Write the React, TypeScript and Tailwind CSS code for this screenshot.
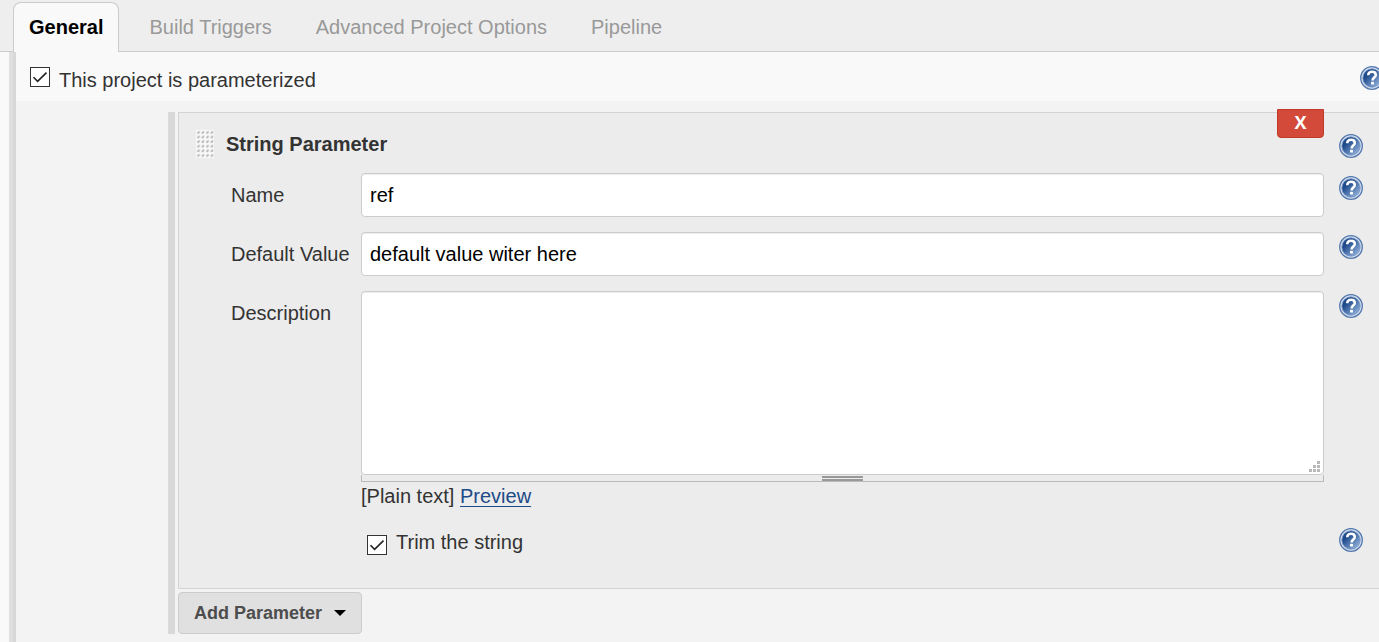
import { useState } from 'react'
import type { ReactNode } from 'react'

const TABS = ['General', 'Build Triggers', 'Advanced Project Options', 'Pipeline']

const FIELD =
  'block w-full rounded border border-[#ccc] bg-white px-2 text-[20px] text-black shadow-[inset_0_1px_1px_rgba(0,0,0,0.075)] outline-none'

function HelpButton({ label }: { label: string }) {
  return (
    <button type="button" aria-label={label} className="block size-6 shrink-0">
      <svg viewBox="0 0 24 24" className="size-6">
        <defs>
          <linearGradient id="help-fill" x1="0" y1="0" x2="1" y2="1">
            <stop offset="0.3" stopColor="#1f4a8c" />
            <stop offset="0.85" stopColor="#8aabd6" />
          </linearGradient>
        </defs>
        <circle cx="12" cy="12" r="11.3" fill="#d3dfef" stroke="#5377ad" strokeWidth="1.3" />
        <circle cx="12" cy="12" r="9.2" fill="url(#help-fill)" stroke="#7896c4" strokeWidth="0.8" />
        <path
          d="M8.2 9.2C8.3 7 9.9 5.8 12.1 5.8c2.2 0 3.7 1.2 3.7 3.1 0 2.6-3.2 2.7-3.2 5.5"
          fill="none"
          stroke="#fff"
          strokeWidth="2.5"
        />
        <rect x="11" y="15.8" width="3" height="2.8" rx="0.6" fill="#fff" />
      </svg>
    </button>
  )
}

interface CheckboxProps {
  id: string
  checked: boolean
  onChange: (value: boolean) => void
}

function Checkbox({ id, checked, onChange }: CheckboxProps) {
  return (
    <span className="grid size-5 shrink-0">
      <input
        id={id}
        type="checkbox"
        checked={checked}
        onChange={(e) => onChange(e.target.checked)}
        className="col-start-1 row-start-1 size-5 appearance-none border border-[#333] bg-white"
      />
      {checked && (
        <svg viewBox="0 0 20 20" className="pointer-events-none col-start-1 row-start-1 size-5">
          <path d="M3.5 10.2 7.6 14.3 16.5 5.6" fill="none" stroke="#222" strokeWidth="1.6" />
        </svg>
      )}
    </span>
  )
}

function DragHandle() {
  return (
    <svg viewBox="0 0 18 28" className="h-7 w-[18px] shrink-0">
      <defs>
        <pattern id="grip" width="4.5" height="4.6" patternUnits="userSpaceOnUse">
          <rect width="4.5" height="4.6" fill="#f8f8f8" />
          <path d="M1.2 3.6V2.4L2.4 1.2H3.8V2.6L2.6 3.8Z" fill="#b8b8b8" />
        </pattern>
      </defs>
      <rect width="18" height="28" fill="url(#grip)" />
    </svg>
  )
}

interface FieldRowProps {
  label: string
  htmlFor: string
  children: ReactNode
}

function FieldRow({ label, htmlFor, children }: FieldRowProps) {
  return (
    <div className="flex items-start">
      <label htmlFor={htmlFor} className="w-[130px] shrink-0 leading-11">
        {label}
      </label>
      <div className="min-w-0 flex-1">{children}</div>
      <div className="ml-[15px] pt-[3px]">
        <HelpButton label={`Help for feature: ${label}`} />
      </div>
    </div>
  )
}

export default function App() {
  const [activeTab, setActiveTab] = useState('General')
  const [parameterized, setParameterized] = useState(true)
  const [trim, setTrim] = useState(true)
  const [name, setName] = useState('ref')
  const [defaultValue, setDefaultValue] = useState('default value witer here')
  const [description, setDescription] = useState('')

  return (
    <div className="flex min-h-screen flex-col overflow-hidden bg-[#f9f9f9] font-['Liberation_Sans',Arial,sans-serif] text-[20px] leading-6 text-[#333]">
      {/* Tab bar */}
      <nav className="flex border-b border-[#ccc] bg-[#eee] pt-0.5 pl-[13px]">
        {TABS.map((tab) => (
          <button
            key={tab}
            type="button"
            onClick={() => setActiveTab(tab)}
            className={
              tab === activeTab
                ? '-mb-px mr-2 h-[50px] rounded-t-lg border border-b-0 border-[#ccc] bg-[#f9f9f9] px-[15px] pb-0.5 font-bold text-black'
                : 'h-[49px] px-[22px] text-[#999]'
            }
          >
            {tab}
          </button>
        ))}
      </nav>

      <div className="flex flex-1">
        <div className="ml-[9px] w-[7px] shrink-0 border-r-[3px] border-[#d8d8d8] bg-[#dfdfdf]" />

        <main className="min-w-0 flex-1 bg-[#f3f3f3]">
          <div className="flex h-[49px] items-center bg-[#f9f9f9] pl-3.5">
            <Checkbox id="parameterized" checked={parameterized} onChange={setParameterized} />
            <label htmlFor="parameterized" className="ml-[9px] flex-1 pt-1.5">
              This project is parameterized
            </label>
            <div className="-mr-[5px] pt-0.5">
              <HelpButton label="Help for feature: This project is parameterized" />
            </div>
          </div>

          <div className="flex pt-[11px] pb-[5px] pl-[152px]">
            <div className="mr-[3px] w-[7px] shrink-0 bg-[#d9d9d9]" />

            <div className="min-w-0 flex-1">
              <section className="relative border-y border-l border-[#d3d3d3] bg-[#ececec] pt-[17px] pr-4 pb-[33px]">
                <button
                  type="button"
                  aria-label="Delete"
                  className="absolute -top-1 right-[55px] h-[29px] w-[47px] rounded-b border border-[#c03a2b] bg-[#d34a3a] pb-1 font-['Open_Sans',sans-serif] text-[18px] leading-6 font-bold text-white"
                >
                  X
                </button>

                <div className="flex items-center pl-[17px]">
                  <DragHandle />
                  <h2 className="ml-3 flex-1 font-bold">String Parameter</h2>
                  <div className="pt-1">
                    <HelpButton label="Help for feature: String Parameter" />
                  </div>
                </div>

                <div className="mt-[15px] flex flex-col gap-[15px] pl-[52px]">
                  <FieldRow label="Name" htmlFor="name">
                    <input
                      id="name"
                      type="text"
                      value={name}
                      onChange={(e) => setName(e.target.value)}
                      className={`${FIELD} h-11`}
                    />
                  </FieldRow>

                  <FieldRow label="Default Value" htmlFor="default-value">
                    <input
                      id="default-value"
                      type="text"
                      value={defaultValue}
                      onChange={(e) => setDefaultValue(e.target.value)}
                      className={`${FIELD} h-11`}
                    />
                  </FieldRow>

                  <FieldRow label="Description" htmlFor="description">
                    <div className="relative">
                      <textarea
                        id="description"
                        value={description}
                        onChange={(e) => setDescription(e.target.value)}
                        className={`${FIELD} h-[184px] resize-none py-2`}
                      />
                      <svg
                        viewBox="0 0 11 11"
                        fill="#b9b9b9"
                        className="pointer-events-none absolute right-[4px] bottom-[3px] size-[11px]"
                      >
                        <path d="M8 0h3v3H8zM4 4h3v3H4zM8 4h3v3H8zM0 8h3v3H0zM4 8h3v3H4zM8 8h3v3H8z" />
                      </svg>
                    </div>
                    {/* Resize bar under the text area */}
                    <div className="flex h-[7px] cursor-s-resize items-end justify-center border-x border-b border-[#bbb]">
                      <div className="h-[5px] w-[41px] border-y-2 border-[#999]" />
                    </div>
                    <p className="mt-0.5">
                      [Plain text]{' '}
                      <a href="#preview" className="text-[#204a87] underline decoration-1 underline-offset-3">
                        Preview
                      </a>
                    </p>
                  </FieldRow>
                </div>

                <div className="mt-5 flex items-start pl-[188px]">
                  <div className="pt-[7px]">
                    <Checkbox id="trim" checked={trim} onChange={setTrim} />
                  </div>
                  <label htmlFor="trim" className="ml-[9px] flex-1 pt-0.5">
                    Trim the string
                  </label>
                  <HelpButton label="Help for feature: Trim the string" />
                </div>
              </section>

              <button
                type="button"
                className="mt-[3px] flex h-[42px] items-center gap-3 rounded border border-[#ccc] bg-[#e0e0e0] px-[15px] text-[18px] font-bold text-[#4d4d4d]"
              >
                Add Parameter
                <svg viewBox="0 0 12 6" className="h-1.5 w-3">
                  <path d="M0 0h12L6 6Z" fill="#000" />
                </svg>
              </button>
            </div>
          </div>
        </main>
      </div>
    </div>
  )
}
